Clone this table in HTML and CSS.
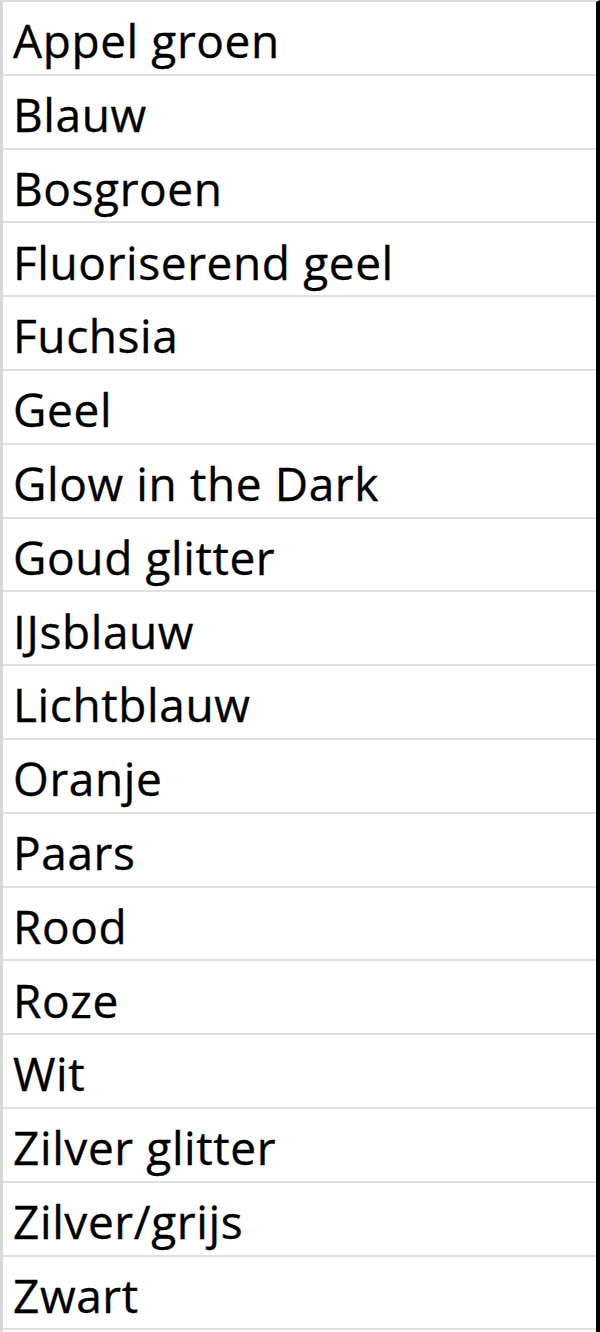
FILE: index.html
```html
<!DOCTYPE html>
<html>
<head>
<meta charset="utf-8">
<link rel="stylesheet" href="styles.css">
</head>
<body>
<div class="sheet">
  <div class="cell">Appel groen</div>
  <div class="cell">Blauw</div>
  <div class="cell">Bosgroen</div>
  <div class="cell">Fluoriserend geel</div>
  <div class="cell">Fuchsia</div>
  <div class="cell">Geel</div>
  <div class="cell">Glow in the Dark</div>
  <div class="cell">Goud glitter</div>
  <div class="cell">IJsblauw</div>
  <div class="cell">Lichtblauw</div>
  <div class="cell">Oranje</div>
  <div class="cell">Paars</div>
  <div class="cell">Rood</div>
  <div class="cell">Roze</div>
  <div class="cell">Wit</div>
  <div class="cell">Zilver glitter</div>
  <div class="cell">Zilver/grijs</div>
  <div class="cell">Zwart</div>
</div>
</body>
</html>
```

FILE: styles.css
```css
html, body {
  margin: 0;
  padding: 0;
  background: #ffffff;
}
.sheet {
  width: 600px;
  height: 1332px;
  box-sizing: border-box;
  border-top: 2px solid #dcdcdc;
  border-left: 3px solid #d8d8d8;
  border-right: 4px solid #000000;
  display: grid;
  grid-template-rows: repeat(18, 73.8px);
  align-content: start;
}
.cell {
  box-sizing: border-box;
  border-bottom: 2px solid #e1e1e1;
  display: flex;
  align-items: flex-end;
  padding: 0 0 10.5px 10px;
  font-family: "Open Sans", "Noto Sans", sans-serif;
  font-size: 46px;
  letter-spacing: 0.6px;
  line-height: 1;
  color: #000000;
  -webkit-text-stroke: 0.35px #000000;
  white-space: nowrap;
  overflow: hidden;
}
```
